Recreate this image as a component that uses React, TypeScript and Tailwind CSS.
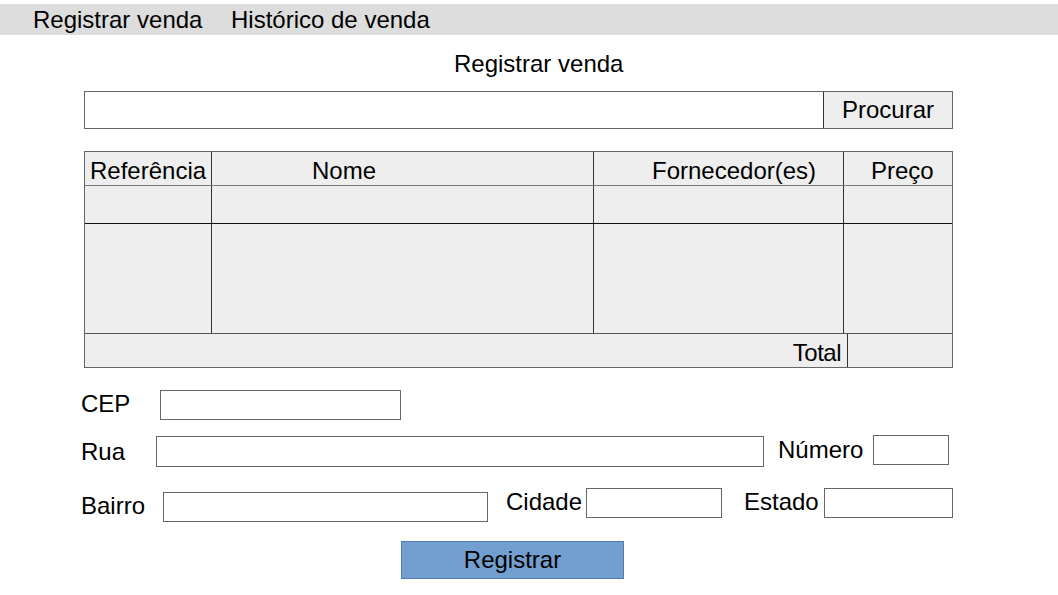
import React from "react";

const font = { fontFamily: '"Liberation Sans", Arial, sans-serif' };

function Box({ className }: { className: string }) {
  return <div className={`bg-white border border-[#666666] ${className}`} />;
}

export default function App() {
  return (
    <div className="w-[1058px] h-[595px] bg-white text-black text-[24px] leading-[28px]" style={font}>
      {/* menu */}
      <nav className="mt-[4px] h-[31px] bg-[#dddddd] flex items-center pl-[33px] leading-[31px]">
        <span className="w-[198px]">Registrar venda</span>
        <span>Histórico de venda</span>
      </nav>

      <h1 className="mt-[15px] pl-[454px]">Registrar venda</h1>

      {/* search */}
      <div className="mt-[13px] ml-[84px] w-[869px] flex h-[38px]">
        <input className="flex-1 bg-white border border-[#666666] outline-none" />
        <button className="w-[129px] bg-[#eeeeee] border border-l-0 border-[#666666] border-l-[#333333] flex items-center justify-center">
          <span className="border-l border-[#333333] h-full -ml-px" />
          <span className="flex-1">Procurar</span>
        </button>
      </div>

      {/* table */}
      <div className="mt-[22px] ml-[84px] w-[869px] border border-[#666666] bg-[#eeeeee]">
        <div className="grid grid-cols-[127px_382px_250px_108px] h-[34px] border-b border-[#777777]">
          <div className="border-r border-[#333333] pl-[5px] pt-[5px]">Referência</div>
          <div className="border-r border-[#333333] pl-[100px] pt-[5px]">Nome</div>
          <div className="border-r border-[#333333] pl-[58px] pt-[5px]">Fornecedor(es)</div>
          <div className="pl-[27px] pt-[5px]">Preço</div>
        </div>
        <div className="grid grid-cols-[127px_382px_250px_108px] h-[38px] border-b border-[#111111]">
          <div className="border-r border-[#333333]" />
          <div className="border-r border-[#333333]" />
          <div className="border-r border-[#333333]" />
          <div />
        </div>
        <div className="grid grid-cols-[127px_382px_250px_108px] h-[110px] border-b border-[#555555]">
          <div className="border-r border-[#333333]" />
          <div className="border-r border-[#333333]" />
          <div className="border-r border-[#333333]" />
          <div />
        </div>
        <div className="flex h-[33px]">
          <div className="w-[763px] border-r border-[#333333] text-right pr-[6px] pt-[5px] tracking-[-0.5px]">Total</div>
          <div className="flex-1" />
        </div>
      </div>

      {/* address form */}
      <div className="mt-[22px] pl-[81px] flex items-start h-[30px]">
        <span className="w-[79px]">CEP</span>
        <Box className="w-[241px] h-[30px]" />
      </div>

      <div className="mt-[15px] pl-[81px] flex items-start h-[32px]">
        <span className="w-[75px] mt-[3px]">Rua</span>
        <Box className="w-[608px] h-[31px] mt-[1px]" />
        <span className="ml-[14px] w-[95px] mt-[1px]">Número</span>
        <Box className="w-[76px] h-[30px]" />
      </div>

      <div className="mt-[21px] pl-[81px] flex items-start h-[34px]">
        <span className="w-[82px] mt-[4px]">Bairro</span>
        <Box className="w-[325px] h-[30px] mt-[4px]" />
        <span className="ml-[18px] w-[80px]">Cidade</span>
        <Box className="w-[136px] h-[30px]" />
        <span className="ml-[22px] w-[80px]">Estado</span>
        <Box className="w-[129px] h-[30px]" />
      </div>

      <button className="mt-[19px] ml-[401px] w-[223px] h-[38px] bg-[#729fcf] border border-[#4f7db8] flex items-center justify-center">
        Registrar
      </button>
    </div>
  );
}
